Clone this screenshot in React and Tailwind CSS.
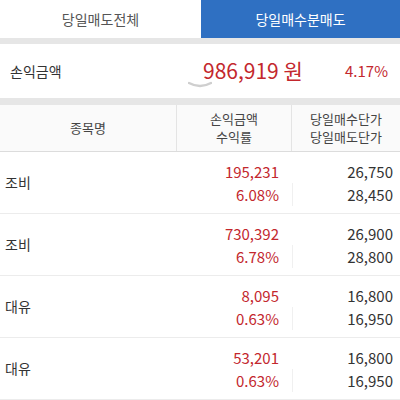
import React from "react";

const rows = [
  { name: "조비", amt: "195,231", rate: "6.08%", buy: "26,750", sell: "28,450" },
  { name: "조비", amt: "730,392", rate: "6.78%", buy: "26,900", sell: "28,800" },
  { name: "대유", amt: "8,095", rate: "0.63%", buy: "16,800", sell: "16,950" },
  { name: "대유", amt: "53,201", rate: "0.63%", buy: "16,800", sell: "16,950" },
];

export default function App() {
  return (
    <div
      className="w-[400px] h-[400px] overflow-hidden bg-white text-[#333]"
      style={{ fontFamily: '"Noto Sans CJK KR", "Noto Sans", sans-serif' }}
    >
      <div className="flex h-[38px]">
        <div className="flex-1 flex items-center justify-center text-[14px] text-[#555]">당일매도전체</div>
        <div className="w-[199px] flex items-center justify-center bg-[#2f70c2] text-white text-[14px]">당일매수분매도</div>
      </div>
      <div className="h-[6px] bg-[#e6e6e6]" />
      <div className="relative flex items-center h-[54px] px-[10px]">
        <div className="text-[14px] text-[#333] w-[193px]">손익금액</div>
        <div className="text-[21px] text-[#c3272d]">986,919 원</div>
        <div className="ml-auto mr-[2px] text-[15px] text-[#c3272d]">4.17%</div>
        <svg className="absolute left-[188px] top-[37px]" width="24" height="8" viewBox="0 0 24 8">
          <path d="M1 2 Q12 8 23 2" stroke="#cfcfcf" strokeWidth="2.5" fill="none" strokeLinecap="round" />
        </svg>
      </div>
      <div className="h-[7px] bg-[#e6e6e6]" />
      <div className="flex h-[47px] bg-[#fafafa] border-b border-[#dcdcdc] text-[13px] text-[#444] leading-[18px]">
        <div className="w-[177px] border-r border-[#e4e4e4] flex items-center justify-center">종목명</div>
        <div className="w-[115px] border-r border-[#e4e4e4] flex flex-col items-center justify-center">
          <span>손익금액</span>
          <span>수익률</span>
        </div>
        <div className="flex-1 flex flex-col items-center justify-center">
          <span>당일매수단가</span>
          <span>당일매도단가</span>
        </div>
      </div>
      {rows.map((r, i) => (
        <div key={i} className="flex h-[62px] border-b border-[#ececec] text-[15px] leading-[23px]">
          <div className="w-[177px] flex items-center pl-[5px] text-[14px] text-[#333]">{r.name}</div>
          <div className="w-[115px] flex flex-col justify-center items-end pr-[13px] text-[#c3272d]">
            <span>{r.amt}</span>
            <span>{r.rate}</span>
          </div>
          <div className="flex-1 flex flex-col justify-center items-end pr-[7px] text-[#333]">
            <span>{r.buy}</span>
            <span className="border-l border-[#f0f0f0] self-stretch text-right">{r.sell}</span>
          </div>
        </div>
      ))}
    </div>
  );
}
